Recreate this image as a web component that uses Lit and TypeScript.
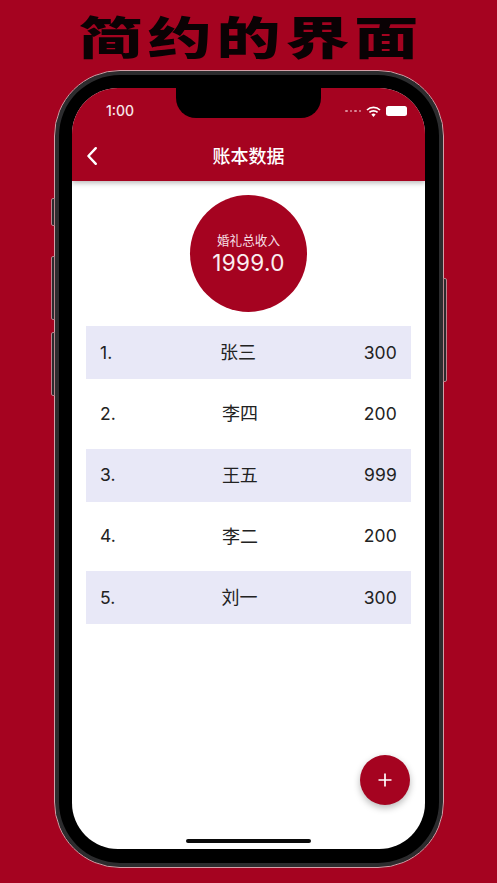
import { LitElement, html, css } from "lit";
import { customElement } from "lit/decorators.js";

const rows = [
  { n: "1.", name: "张三", v: "300" },
  { n: "2.", name: "李四", v: "200" },
  { n: "3.", name: "王五", v: "999" },
  { n: "4.", name: "李二", v: "200" },
  { n: "5.", name: "刘一", v: "300" },
];

@customElement("app-root")
export class AppRoot extends LitElement {
  static styles = css`
    :host {
      display: block;
      width: 497px;
      height: 883px;
      overflow: hidden;
      background: #a50320;
      font-family: "Inter", "Roboto", "Noto Sans CJK SC", sans-serif;
      --red: #a50320;
    }
    .headline {
      height: 70px;
      margin: 0;
      display: flex;
      justify-content: center;
      align-items: flex-start;
      gap: 3.5px;
      padding-top: 13px;
      box-sizing: border-box;
      font: 900 45px/45px "Noto Sans CJK SC", sans-serif;
      color: #0a0204;
      transform: scaleX(1.42);
    }
    .headline span { display: block; width: 45px; text-align: center; }
    .phone {
      position: relative;
      box-sizing: border-box;
      width: 390px;
      height: 798px;
      margin-left: 54px;
      padding: 17px 18px 18px 17px;
      background: #000;
      border: 1px solid #d2a0a8;
      border-radius: 66px;
      box-shadow: inset 0 0 0 4px #2c2c2e;
    }
    .btn {
      position: absolute;
      width: 4px;
      background: #2a2a2c;
      border: 1px solid #b9848d;
      box-sizing: border-box;
      border-radius: 2px 0 0 2px;
    }
    .b1 { left: -4px; top: 127px; height: 28px; }
    .b2 { left: -4px; top: 185px; height: 64px; }
    .b3 { left: -4px; top: 261px; height: 64px; }
    .b4 { right: -4px; top: 207px; height: 104px; border-radius: 0 2px 2px 0; }
    .screen {
      position: relative;
      height: 100%;
      background: #fff;
      border-radius: 46px;
      overflow: hidden;
      display: flex;
      flex-direction: column;
    }
    .appbar {
      flex: none;
      height: 93px;
      background: var(--red);
      color: #fff;
      box-shadow: 0 2px 5px rgba(0, 0, 0, 0.28);
      display: flex;
      flex-direction: column;
    }
    .status {
      height: 46px;
      flex: none;
      display: flex;
      align-items: center;
      justify-content: space-between;
      padding: 0 18px 0 34px;
    }
    .time { font: 500 14px/16px "Inter", sans-serif; color: #f6e6e9; }
    .sys { display: flex; align-items: center; gap: 5px; }
    .dots { display: flex; gap: 2px; }
    .dots i { width: 2.5px; height: 2.5px; border-radius: 50%; background: #d98b98; }
    .wifi { display: block; width: 15px; height: 11px; }
    .battery { width: 21px; height: 10px; border-radius: 2.5px; background: #fff; }
    .nav {
      flex: 1;
      display: flex;
      align-items: flex-start;
      justify-content: center;
      position: relative;
    }
    .back { position: absolute; left: 14px; top: 12px; width: 13px; height: 20px; }
    .title { font: 500 18px/22px "Noto Sans CJK SC", sans-serif; color: #fff; margin-top: 10px; }
    .notch {
      position: absolute;
      left: 104px;
      top: 0;
      width: 145px;
      height: 30px;
      background: #000;
      border-radius: 0 0 20px 20px;
    }
    .body {
      flex: 1;
      display: flex;
      flex-direction: column;
      align-items: center;
      padding: 14px 14px 0;
    }
    .circle {
      box-sizing: border-box;
      width: 117px;
      height: 117px;
      padding-bottom: 4px;
      border-radius: 50%;
      background: var(--red);
      color: #fff;
      display: flex;
      flex-direction: column;
      align-items: center;
      justify-content: center;
      margin-bottom: 14px;
    }
    .circle .label { font: 400 12.6px/16px "Noto Sans CJK SC", sans-serif; color: #f5dfe3; margin-top: 5px; }
    .circle .total { font: 400 22.5px/28px "Inter", sans-serif; margin-top: 1px; letter-spacing: 0.3px; color: #fbeff1; }
    .list { width: 325px; display: flex; flex-direction: column; gap: 8.3px; }
    .row {
      height: 53px;
      box-sizing: border-box;
      padding: 0 14px;
      display: flex;
      align-items: center;
      justify-content: space-between;
      font: 400 17.5px/24px "Inter", "Noto Sans CJK SC", sans-serif;
      letter-spacing: 0.15px;
      color: #222;
    }
    .row .cjk { font-family: "Noto Sans CJK SC", sans-serif; font-size: 18px; letter-spacing: 0; padding-bottom: 3px; }
    .row:nth-child(odd) { background: #e8e8f7; }
    .fab {
      position: absolute;
      left: 288px;
      top: 667px;
      width: 50px;
      height: 50px;
      border-radius: 50%;
      background: var(--red);
      box-shadow: 0 3px 7px rgba(0, 0, 0, 0.28);
      display: flex;
      align-items: center;
      justify-content: center;
    }
    .fab svg { display: block; width: 14px; height: 14px; }
    .home {
      position: absolute;
      left: 114px;
      top: 751px;
      width: 125px;
      height: 4px;
      background: #0a0a0a;
      border-radius: 2px;
    }
  `;

  render() {
    return html`
      <h1 class="headline"><span>简</span><span>约</span><span>的</span><span>界</span><span>面</span></h1>
      <div class="phone">
        <i class="btn b1"></i><i class="btn b2"></i><i class="btn b3"></i><i class="btn b4"></i>
        <div class="screen">
          <header class="appbar">
            <div class="status">
              <span class="time">1:00</span>
              <div class="sys">
                <div class="dots"><i></i><i></i><i></i><i></i></div>
                <svg class="wifi" viewBox="0 0 15 11" fill="none" stroke="#fff" stroke-width="1.7">
                  <path d="M1 4 A9.5 9.5 0 0 1 14 4" />
                  <path d="M3.4 6.4 A6 6 0 0 1 11.6 6.4" />
                  <path d="M7.5 11 L5.4 8.6 A3 3 0 0 1 9.6 8.6 Z" fill="#fff" stroke="none" />
                </svg>
                <div class="battery"></div>
              </div>
            </div>
            <div class="nav">
              <svg class="back" viewBox="0 0 13 20" fill="none" stroke="#fff" stroke-width="2.4" stroke-linecap="round" stroke-linejoin="round">
                <path d="M9.8 2.2 L2.4 10 L9.8 17.8" />
              </svg>
              <span class="title">账本数据</span>
            </div>
          </header>
          <div class="notch"></div>
          <main class="body">
            <div class="circle">
              <span class="label">婚礼总收入</span>
              <span class="total">1999.0</span>
            </div>
            <div class="list">
              ${rows.map(
                (r) => html`<div class="row"><span>${r.n}</span><span class="cjk">${r.name}</span><span>${r.v}</span></div>`
              )}
            </div>
          </main>
          <div class="fab">
            <svg viewBox="0 0 14 14" stroke="#fff" stroke-width="1.7"><path d="M7 0.5 V13.5 M0.5 7 H13.5" /></svg>
          </div>
          <div class="home"></div>
        </div>
      </div>
    `;
  }
}
